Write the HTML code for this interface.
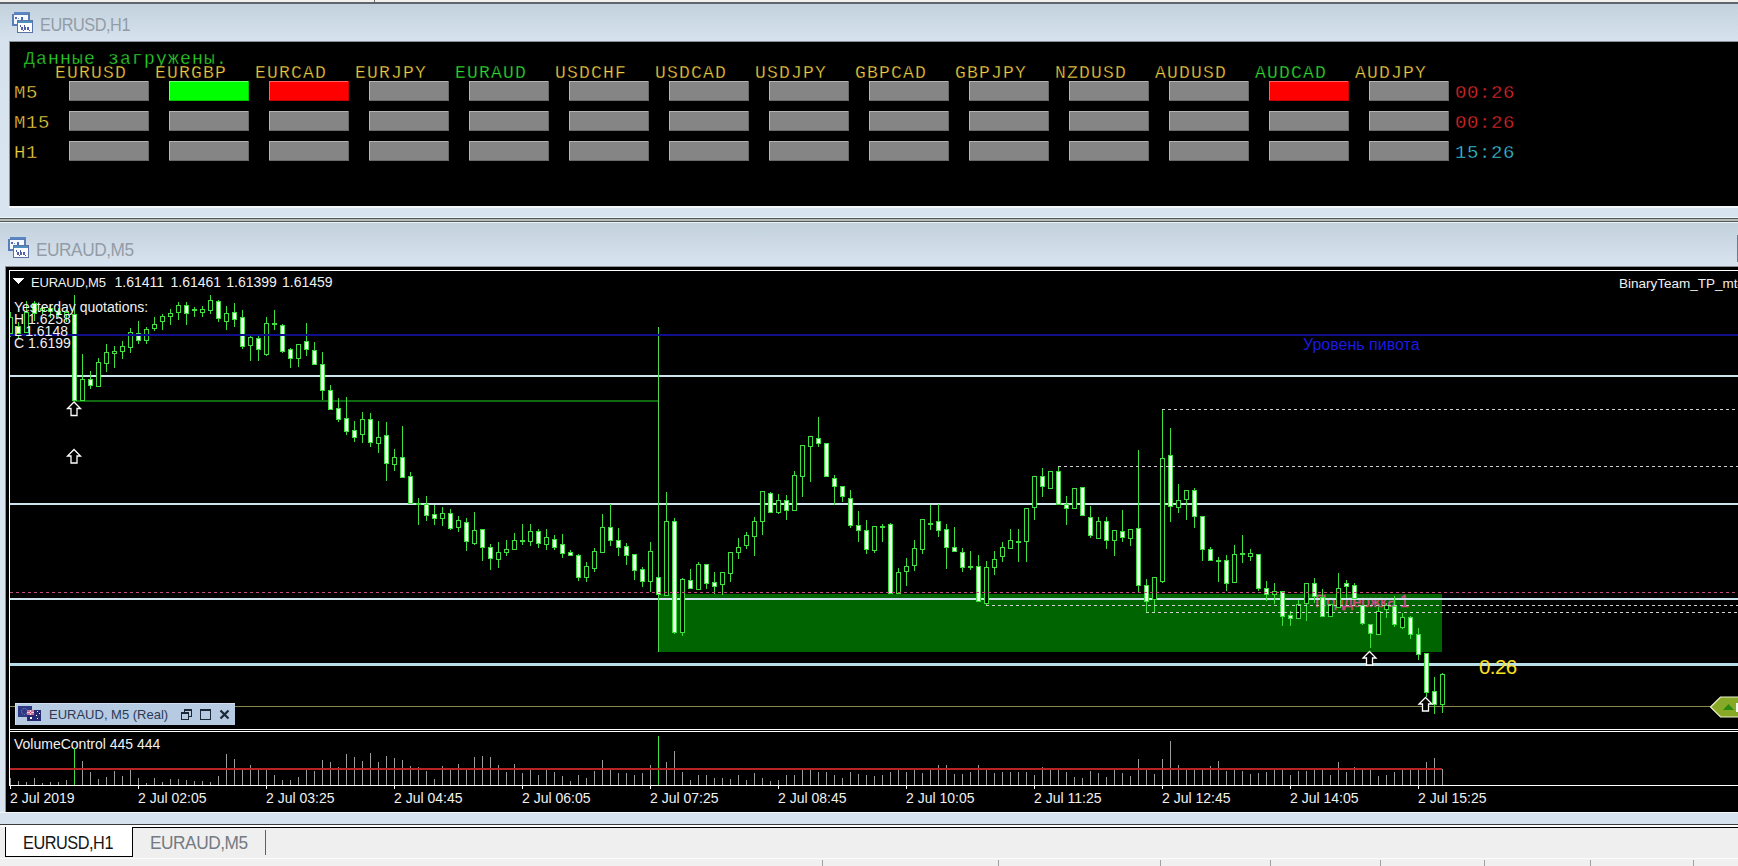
<!DOCTYPE html><html><head><meta charset="utf-8"><style>
html,body{margin:0;padding:0;width:1738px;height:866px;overflow:hidden;background:#f0f0f0;}
.abs{position:absolute;}
</style></head><body>
<svg width="1738" height="866" viewBox="0 0 1738 866" style="position:absolute;left:0;top:0" shape-rendering="crispEdges" font-family='"Liberation Sans", sans-serif'>
<defs><linearGradient id="tb1" gradientUnits="userSpaceOnUse" x1="0" y1="4" x2="0" y2="217"><stop offset="0" stop-color="#c3d1dd"/><stop offset="0.17" stop-color="#d6e3ef"/><stop offset="1" stop-color="#d8e4f0"/></linearGradient><linearGradient id="tb2" gradientUnits="userSpaceOnUse" x1="0" y1="223" x2="0" y2="813"><stop offset="0" stop-color="#c3d1dd"/><stop offset="0.073" stop-color="#d8e4f0"/><stop offset="1" stop-color="#d8e4f0"/></linearGradient></defs>
<rect x="0" y="0" width="1738" height="2" fill="#f1f0ed" />
<rect x="374" y="0" width="1" height="2" fill="#6a6a6a" />
<rect x="0" y="2" width="1738" height="2" fill="#5f656c" />
<rect x="0" y="4" width="1738" height="214" fill="url(#tb1)" />
<rect x="9" y="41" width="1729" height="1" fill="#8d9298" />
<rect x="9" y="41" width="1" height="165" fill="#8d9298" />
<rect x="10" y="42" width="1728" height="164" fill="#000" />
<rect x="9" y="206" width="1729" height="2" fill="#f4f8fb" />
<rect x="0" y="217" width="1738" height="1" fill="#eef3f7" />
<rect x="0" y="218" width="1738" height="1" fill="#4f5858" />
<rect x="0" y="219" width="1738" height="2" fill="#b8bcb8" />
<rect x="0" y="221" width="1738" height="1" fill="#4f5858" />
<rect x="0" y="222" width="1738" height="1" fill="#eef3f7" />
<rect x="0" y="223" width="1738" height="590" fill="url(#tb2)" />
<rect x="5" y="266" width="1733" height="1" fill="#8d9298" />
<rect x="5" y="266" width="1" height="546" fill="#8d9298" />
<rect x="6" y="267" width="1732" height="545" fill="#000" />
<rect x="0" y="812" width="1738" height="1" fill="#f4f8fb" />
<rect x="0" y="813" width="1738" height="11" fill="#d6e3ef" />
<rect x="0" y="824" width="1738" height="1" fill="#3c3c3c" />
<rect x="0" y="825" width="1738" height="41" fill="#efefef" />
<g transform="translate(12,12)">
<rect x="2" y="0" width="16" height="3" fill="#5b85c5" />
<rect x="0" y="2" width="18" height="12" fill="#5b7db5" />
<rect x="2" y="3" width="14" height="9" fill="#f6faff" />
<rect x="3" y="5" width="2" height="2" fill="#4a6ac0" />
<rect x="9" y="5" width="2" height="3" fill="#4a6ac0" />
<rect x="6" y="6" width="1" height="1" fill="#8090d0" />
<rect x="5" y="8" width="16" height="13" fill="#5a74a8" />
<rect x="6" y="9" width="14" height="2" fill="#4f8fc0" />
<rect x="6" y="11" width="14" height="9" fill="#ffffff" />
<rect x="8" y="13" width="1" height="2" fill="#4a5aa0" />
<rect x="9" y="15" width="2" height="3" fill="#5060b0" />
<rect x="12" y="15" width="2" height="3" fill="#5060b0" />
<rect x="15" y="15" width="2" height="3" fill="#5060b0" />
<rect x="12" y="13" width="1" height="2" fill="#4a5aa0" />
<rect x="17" y="18" width="1" height="1" fill="#4a5aa0" />
<rect x="11" y="18" width="1" height="1" fill="#4a5aa0" />
</g>
<g transform="translate(8,237)">
<rect x="2" y="0" width="16" height="3" fill="#5b85c5" />
<rect x="0" y="2" width="18" height="12" fill="#5b7db5" />
<rect x="2" y="3" width="14" height="9" fill="#f6faff" />
<rect x="3" y="5" width="2" height="2" fill="#4a6ac0" />
<rect x="9" y="5" width="2" height="3" fill="#4a6ac0" />
<rect x="6" y="6" width="1" height="1" fill="#8090d0" />
<rect x="5" y="8" width="16" height="13" fill="#5a74a8" />
<rect x="6" y="9" width="14" height="2" fill="#4f8fc0" />
<rect x="6" y="11" width="14" height="9" fill="#ffffff" />
<rect x="8" y="13" width="1" height="2" fill="#4a5aa0" />
<rect x="9" y="15" width="2" height="3" fill="#5060b0" />
<rect x="12" y="15" width="2" height="3" fill="#5060b0" />
<rect x="15" y="15" width="2" height="3" fill="#5060b0" />
<rect x="12" y="13" width="1" height="2" fill="#4a5aa0" />
<rect x="17" y="18" width="1" height="1" fill="#4a5aa0" />
<rect x="11" y="18" width="1" height="1" fill="#4a5aa0" />
</g>
<rect x="1737" y="235" width="1" height="27" fill="#6c7a8e" />
<text transform="translate(40,31) scale(0.88,1)" x="0" y="0" font-size="18.5" letter-spacing="-0.5" fill="#939ca6">EURUSD,H1</text>
<text transform="translate(36,256) scale(0.935,1)" x="0" y="0" font-size="18.5" letter-spacing="-0.5" fill="#939ca6">EURAUD,M5</text>
<text x="24" y="64" font-size="18" letter-spacing="1.2" font-family='"Liberation Mono", monospace' fill="#2ee02e">Данные загружены.</text>
<text x="24" y="64" font-size="18" letter-spacing="1.2" font-family='"Liberation Mono", monospace' fill="none" stroke="#000" stroke-width="0.35">Данные загружены.</text>
<text x="55" y="78" font-size="18" letter-spacing="1.2" font-family='"Liberation Mono", monospace' fill="#f2d040">EURUSD</text>
<text x="55" y="78" font-size="18" letter-spacing="1.2" font-family='"Liberation Mono", monospace' fill="none" stroke="#000" stroke-width="0.35">EURUSD</text>
<text x="155" y="78" font-size="18" letter-spacing="1.2" font-family='"Liberation Mono", monospace' fill="#f2d040">EURGBP</text>
<text x="155" y="78" font-size="18" letter-spacing="1.2" font-family='"Liberation Mono", monospace' fill="none" stroke="#000" stroke-width="0.35">EURGBP</text>
<text x="255" y="78" font-size="18" letter-spacing="1.2" font-family='"Liberation Mono", monospace' fill="#f2d040">EURCAD</text>
<text x="255" y="78" font-size="18" letter-spacing="1.2" font-family='"Liberation Mono", monospace' fill="none" stroke="#000" stroke-width="0.35">EURCAD</text>
<text x="355" y="78" font-size="18" letter-spacing="1.2" font-family='"Liberation Mono", monospace' fill="#f2d040">EURJPY</text>
<text x="355" y="78" font-size="18" letter-spacing="1.2" font-family='"Liberation Mono", monospace' fill="none" stroke="#000" stroke-width="0.35">EURJPY</text>
<text x="455" y="78" font-size="18" letter-spacing="1.2" font-family='"Liberation Mono", monospace' fill="#2ee02e">EURAUD</text>
<text x="455" y="78" font-size="18" letter-spacing="1.2" font-family='"Liberation Mono", monospace' fill="none" stroke="#000" stroke-width="0.35">EURAUD</text>
<text x="555" y="78" font-size="18" letter-spacing="1.2" font-family='"Liberation Mono", monospace' fill="#f2d040">USDCHF</text>
<text x="555" y="78" font-size="18" letter-spacing="1.2" font-family='"Liberation Mono", monospace' fill="none" stroke="#000" stroke-width="0.35">USDCHF</text>
<text x="655" y="78" font-size="18" letter-spacing="1.2" font-family='"Liberation Mono", monospace' fill="#f2d040">USDCAD</text>
<text x="655" y="78" font-size="18" letter-spacing="1.2" font-family='"Liberation Mono", monospace' fill="none" stroke="#000" stroke-width="0.35">USDCAD</text>
<text x="755" y="78" font-size="18" letter-spacing="1.2" font-family='"Liberation Mono", monospace' fill="#f2d040">USDJPY</text>
<text x="755" y="78" font-size="18" letter-spacing="1.2" font-family='"Liberation Mono", monospace' fill="none" stroke="#000" stroke-width="0.35">USDJPY</text>
<text x="855" y="78" font-size="18" letter-spacing="1.2" font-family='"Liberation Mono", monospace' fill="#f2d040">GBPCAD</text>
<text x="855" y="78" font-size="18" letter-spacing="1.2" font-family='"Liberation Mono", monospace' fill="none" stroke="#000" stroke-width="0.35">GBPCAD</text>
<text x="955" y="78" font-size="18" letter-spacing="1.2" font-family='"Liberation Mono", monospace' fill="#f2d040">GBPJPY</text>
<text x="955" y="78" font-size="18" letter-spacing="1.2" font-family='"Liberation Mono", monospace' fill="none" stroke="#000" stroke-width="0.35">GBPJPY</text>
<text x="1055" y="78" font-size="18" letter-spacing="1.2" font-family='"Liberation Mono", monospace' fill="#f2d040">NZDUSD</text>
<text x="1055" y="78" font-size="18" letter-spacing="1.2" font-family='"Liberation Mono", monospace' fill="none" stroke="#000" stroke-width="0.35">NZDUSD</text>
<text x="1155" y="78" font-size="18" letter-spacing="1.2" font-family='"Liberation Mono", monospace' fill="#f2d040">AUDUSD</text>
<text x="1155" y="78" font-size="18" letter-spacing="1.2" font-family='"Liberation Mono", monospace' fill="none" stroke="#000" stroke-width="0.35">AUDUSD</text>
<text x="1255" y="78" font-size="18" letter-spacing="1.2" font-family='"Liberation Mono", monospace' fill="#2ee02e">AUDCAD</text>
<text x="1255" y="78" font-size="18" letter-spacing="1.2" font-family='"Liberation Mono", monospace' fill="none" stroke="#000" stroke-width="0.35">AUDCAD</text>
<text x="1355" y="78" font-size="18" letter-spacing="1.2" font-family='"Liberation Mono", monospace' fill="#f2d040">AUDJPY</text>
<text x="1355" y="78" font-size="18" letter-spacing="1.2" font-family='"Liberation Mono", monospace' fill="none" stroke="#000" stroke-width="0.35">AUDJPY</text>
<text x="14" y="98" font-size="19" letter-spacing="0.6" font-family='"Liberation Mono", monospace' fill="#f2d040">M5</text>
<text x="14" y="98" font-size="19" letter-spacing="0.6" font-family='"Liberation Mono", monospace' fill="none" stroke="#000" stroke-width="0.35">M5</text>
<text x="14" y="128" font-size="19" letter-spacing="0.6" font-family='"Liberation Mono", monospace' fill="#f2d040">M15</text>
<text x="14" y="128" font-size="19" letter-spacing="0.6" font-family='"Liberation Mono", monospace' fill="none" stroke="#000" stroke-width="0.35">M15</text>
<text x="14" y="158" font-size="19" letter-spacing="0.6" font-family='"Liberation Mono", monospace' fill="#f2d040">H1</text>
<text x="14" y="158" font-size="19" letter-spacing="0.6" font-family='"Liberation Mono", monospace' fill="none" stroke="#000" stroke-width="0.35">H1</text>
<rect x="69" y="81" width="80" height="20" fill="#858585" />
<rect x="69" y="81" width="80" height="1" fill="#b4b4b4" />
<rect x="69" y="81" width="1" height="20" fill="#b4b4b4" />
<rect x="69" y="100" width="80" height="1" fill="#6a6a6a" />
<rect x="148" y="81" width="1" height="20" fill="#6a6a6a" />
<rect x="169" y="81" width="80" height="20" fill="#00ff00" />
<rect x="169" y="81" width="80" height="1" fill="#70ff70" />
<rect x="169" y="81" width="1" height="20" fill="#70ff70" />
<rect x="169" y="100" width="80" height="1" fill="#00c800" />
<rect x="248" y="81" width="1" height="20" fill="#00c800" />
<rect x="269" y="81" width="80" height="20" fill="#ff0000" />
<rect x="269" y="81" width="80" height="1" fill="#ff6060" />
<rect x="269" y="81" width="1" height="20" fill="#ff6060" />
<rect x="269" y="100" width="80" height="1" fill="#c80000" />
<rect x="348" y="81" width="1" height="20" fill="#c80000" />
<rect x="369" y="81" width="80" height="20" fill="#858585" />
<rect x="369" y="81" width="80" height="1" fill="#b4b4b4" />
<rect x="369" y="81" width="1" height="20" fill="#b4b4b4" />
<rect x="369" y="100" width="80" height="1" fill="#6a6a6a" />
<rect x="448" y="81" width="1" height="20" fill="#6a6a6a" />
<rect x="469" y="81" width="80" height="20" fill="#858585" />
<rect x="469" y="81" width="80" height="1" fill="#b4b4b4" />
<rect x="469" y="81" width="1" height="20" fill="#b4b4b4" />
<rect x="469" y="100" width="80" height="1" fill="#6a6a6a" />
<rect x="548" y="81" width="1" height="20" fill="#6a6a6a" />
<rect x="569" y="81" width="80" height="20" fill="#858585" />
<rect x="569" y="81" width="80" height="1" fill="#b4b4b4" />
<rect x="569" y="81" width="1" height="20" fill="#b4b4b4" />
<rect x="569" y="100" width="80" height="1" fill="#6a6a6a" />
<rect x="648" y="81" width="1" height="20" fill="#6a6a6a" />
<rect x="669" y="81" width="80" height="20" fill="#858585" />
<rect x="669" y="81" width="80" height="1" fill="#b4b4b4" />
<rect x="669" y="81" width="1" height="20" fill="#b4b4b4" />
<rect x="669" y="100" width="80" height="1" fill="#6a6a6a" />
<rect x="748" y="81" width="1" height="20" fill="#6a6a6a" />
<rect x="769" y="81" width="80" height="20" fill="#858585" />
<rect x="769" y="81" width="80" height="1" fill="#b4b4b4" />
<rect x="769" y="81" width="1" height="20" fill="#b4b4b4" />
<rect x="769" y="100" width="80" height="1" fill="#6a6a6a" />
<rect x="848" y="81" width="1" height="20" fill="#6a6a6a" />
<rect x="869" y="81" width="80" height="20" fill="#858585" />
<rect x="869" y="81" width="80" height="1" fill="#b4b4b4" />
<rect x="869" y="81" width="1" height="20" fill="#b4b4b4" />
<rect x="869" y="100" width="80" height="1" fill="#6a6a6a" />
<rect x="948" y="81" width="1" height="20" fill="#6a6a6a" />
<rect x="969" y="81" width="80" height="20" fill="#858585" />
<rect x="969" y="81" width="80" height="1" fill="#b4b4b4" />
<rect x="969" y="81" width="1" height="20" fill="#b4b4b4" />
<rect x="969" y="100" width="80" height="1" fill="#6a6a6a" />
<rect x="1048" y="81" width="1" height="20" fill="#6a6a6a" />
<rect x="1069" y="81" width="80" height="20" fill="#858585" />
<rect x="1069" y="81" width="80" height="1" fill="#b4b4b4" />
<rect x="1069" y="81" width="1" height="20" fill="#b4b4b4" />
<rect x="1069" y="100" width="80" height="1" fill="#6a6a6a" />
<rect x="1148" y="81" width="1" height="20" fill="#6a6a6a" />
<rect x="1169" y="81" width="80" height="20" fill="#858585" />
<rect x="1169" y="81" width="80" height="1" fill="#b4b4b4" />
<rect x="1169" y="81" width="1" height="20" fill="#b4b4b4" />
<rect x="1169" y="100" width="80" height="1" fill="#6a6a6a" />
<rect x="1248" y="81" width="1" height="20" fill="#6a6a6a" />
<rect x="1269" y="81" width="80" height="20" fill="#ff0000" />
<rect x="1269" y="81" width="80" height="1" fill="#ff6060" />
<rect x="1269" y="81" width="1" height="20" fill="#ff6060" />
<rect x="1269" y="100" width="80" height="1" fill="#c80000" />
<rect x="1348" y="81" width="1" height="20" fill="#c80000" />
<rect x="1369" y="81" width="80" height="20" fill="#858585" />
<rect x="1369" y="81" width="80" height="1" fill="#b4b4b4" />
<rect x="1369" y="81" width="1" height="20" fill="#b4b4b4" />
<rect x="1369" y="100" width="80" height="1" fill="#6a6a6a" />
<rect x="1448" y="81" width="1" height="20" fill="#6a6a6a" />
<rect x="69" y="111" width="80" height="20" fill="#858585" />
<rect x="69" y="111" width="80" height="1" fill="#b4b4b4" />
<rect x="69" y="111" width="1" height="20" fill="#b4b4b4" />
<rect x="69" y="130" width="80" height="1" fill="#6a6a6a" />
<rect x="148" y="111" width="1" height="20" fill="#6a6a6a" />
<rect x="169" y="111" width="80" height="20" fill="#858585" />
<rect x="169" y="111" width="80" height="1" fill="#b4b4b4" />
<rect x="169" y="111" width="1" height="20" fill="#b4b4b4" />
<rect x="169" y="130" width="80" height="1" fill="#6a6a6a" />
<rect x="248" y="111" width="1" height="20" fill="#6a6a6a" />
<rect x="269" y="111" width="80" height="20" fill="#858585" />
<rect x="269" y="111" width="80" height="1" fill="#b4b4b4" />
<rect x="269" y="111" width="1" height="20" fill="#b4b4b4" />
<rect x="269" y="130" width="80" height="1" fill="#6a6a6a" />
<rect x="348" y="111" width="1" height="20" fill="#6a6a6a" />
<rect x="369" y="111" width="80" height="20" fill="#858585" />
<rect x="369" y="111" width="80" height="1" fill="#b4b4b4" />
<rect x="369" y="111" width="1" height="20" fill="#b4b4b4" />
<rect x="369" y="130" width="80" height="1" fill="#6a6a6a" />
<rect x="448" y="111" width="1" height="20" fill="#6a6a6a" />
<rect x="469" y="111" width="80" height="20" fill="#858585" />
<rect x="469" y="111" width="80" height="1" fill="#b4b4b4" />
<rect x="469" y="111" width="1" height="20" fill="#b4b4b4" />
<rect x="469" y="130" width="80" height="1" fill="#6a6a6a" />
<rect x="548" y="111" width="1" height="20" fill="#6a6a6a" />
<rect x="569" y="111" width="80" height="20" fill="#858585" />
<rect x="569" y="111" width="80" height="1" fill="#b4b4b4" />
<rect x="569" y="111" width="1" height="20" fill="#b4b4b4" />
<rect x="569" y="130" width="80" height="1" fill="#6a6a6a" />
<rect x="648" y="111" width="1" height="20" fill="#6a6a6a" />
<rect x="669" y="111" width="80" height="20" fill="#858585" />
<rect x="669" y="111" width="80" height="1" fill="#b4b4b4" />
<rect x="669" y="111" width="1" height="20" fill="#b4b4b4" />
<rect x="669" y="130" width="80" height="1" fill="#6a6a6a" />
<rect x="748" y="111" width="1" height="20" fill="#6a6a6a" />
<rect x="769" y="111" width="80" height="20" fill="#858585" />
<rect x="769" y="111" width="80" height="1" fill="#b4b4b4" />
<rect x="769" y="111" width="1" height="20" fill="#b4b4b4" />
<rect x="769" y="130" width="80" height="1" fill="#6a6a6a" />
<rect x="848" y="111" width="1" height="20" fill="#6a6a6a" />
<rect x="869" y="111" width="80" height="20" fill="#858585" />
<rect x="869" y="111" width="80" height="1" fill="#b4b4b4" />
<rect x="869" y="111" width="1" height="20" fill="#b4b4b4" />
<rect x="869" y="130" width="80" height="1" fill="#6a6a6a" />
<rect x="948" y="111" width="1" height="20" fill="#6a6a6a" />
<rect x="969" y="111" width="80" height="20" fill="#858585" />
<rect x="969" y="111" width="80" height="1" fill="#b4b4b4" />
<rect x="969" y="111" width="1" height="20" fill="#b4b4b4" />
<rect x="969" y="130" width="80" height="1" fill="#6a6a6a" />
<rect x="1048" y="111" width="1" height="20" fill="#6a6a6a" />
<rect x="1069" y="111" width="80" height="20" fill="#858585" />
<rect x="1069" y="111" width="80" height="1" fill="#b4b4b4" />
<rect x="1069" y="111" width="1" height="20" fill="#b4b4b4" />
<rect x="1069" y="130" width="80" height="1" fill="#6a6a6a" />
<rect x="1148" y="111" width="1" height="20" fill="#6a6a6a" />
<rect x="1169" y="111" width="80" height="20" fill="#858585" />
<rect x="1169" y="111" width="80" height="1" fill="#b4b4b4" />
<rect x="1169" y="111" width="1" height="20" fill="#b4b4b4" />
<rect x="1169" y="130" width="80" height="1" fill="#6a6a6a" />
<rect x="1248" y="111" width="1" height="20" fill="#6a6a6a" />
<rect x="1269" y="111" width="80" height="20" fill="#858585" />
<rect x="1269" y="111" width="80" height="1" fill="#b4b4b4" />
<rect x="1269" y="111" width="1" height="20" fill="#b4b4b4" />
<rect x="1269" y="130" width="80" height="1" fill="#6a6a6a" />
<rect x="1348" y="111" width="1" height="20" fill="#6a6a6a" />
<rect x="1369" y="111" width="80" height="20" fill="#858585" />
<rect x="1369" y="111" width="80" height="1" fill="#b4b4b4" />
<rect x="1369" y="111" width="1" height="20" fill="#b4b4b4" />
<rect x="1369" y="130" width="80" height="1" fill="#6a6a6a" />
<rect x="1448" y="111" width="1" height="20" fill="#6a6a6a" />
<rect x="69" y="141" width="80" height="20" fill="#858585" />
<rect x="69" y="141" width="80" height="1" fill="#b4b4b4" />
<rect x="69" y="141" width="1" height="20" fill="#b4b4b4" />
<rect x="69" y="160" width="80" height="1" fill="#6a6a6a" />
<rect x="148" y="141" width="1" height="20" fill="#6a6a6a" />
<rect x="169" y="141" width="80" height="20" fill="#858585" />
<rect x="169" y="141" width="80" height="1" fill="#b4b4b4" />
<rect x="169" y="141" width="1" height="20" fill="#b4b4b4" />
<rect x="169" y="160" width="80" height="1" fill="#6a6a6a" />
<rect x="248" y="141" width="1" height="20" fill="#6a6a6a" />
<rect x="269" y="141" width="80" height="20" fill="#858585" />
<rect x="269" y="141" width="80" height="1" fill="#b4b4b4" />
<rect x="269" y="141" width="1" height="20" fill="#b4b4b4" />
<rect x="269" y="160" width="80" height="1" fill="#6a6a6a" />
<rect x="348" y="141" width="1" height="20" fill="#6a6a6a" />
<rect x="369" y="141" width="80" height="20" fill="#858585" />
<rect x="369" y="141" width="80" height="1" fill="#b4b4b4" />
<rect x="369" y="141" width="1" height="20" fill="#b4b4b4" />
<rect x="369" y="160" width="80" height="1" fill="#6a6a6a" />
<rect x="448" y="141" width="1" height="20" fill="#6a6a6a" />
<rect x="469" y="141" width="80" height="20" fill="#858585" />
<rect x="469" y="141" width="80" height="1" fill="#b4b4b4" />
<rect x="469" y="141" width="1" height="20" fill="#b4b4b4" />
<rect x="469" y="160" width="80" height="1" fill="#6a6a6a" />
<rect x="548" y="141" width="1" height="20" fill="#6a6a6a" />
<rect x="569" y="141" width="80" height="20" fill="#858585" />
<rect x="569" y="141" width="80" height="1" fill="#b4b4b4" />
<rect x="569" y="141" width="1" height="20" fill="#b4b4b4" />
<rect x="569" y="160" width="80" height="1" fill="#6a6a6a" />
<rect x="648" y="141" width="1" height="20" fill="#6a6a6a" />
<rect x="669" y="141" width="80" height="20" fill="#858585" />
<rect x="669" y="141" width="80" height="1" fill="#b4b4b4" />
<rect x="669" y="141" width="1" height="20" fill="#b4b4b4" />
<rect x="669" y="160" width="80" height="1" fill="#6a6a6a" />
<rect x="748" y="141" width="1" height="20" fill="#6a6a6a" />
<rect x="769" y="141" width="80" height="20" fill="#858585" />
<rect x="769" y="141" width="80" height="1" fill="#b4b4b4" />
<rect x="769" y="141" width="1" height="20" fill="#b4b4b4" />
<rect x="769" y="160" width="80" height="1" fill="#6a6a6a" />
<rect x="848" y="141" width="1" height="20" fill="#6a6a6a" />
<rect x="869" y="141" width="80" height="20" fill="#858585" />
<rect x="869" y="141" width="80" height="1" fill="#b4b4b4" />
<rect x="869" y="141" width="1" height="20" fill="#b4b4b4" />
<rect x="869" y="160" width="80" height="1" fill="#6a6a6a" />
<rect x="948" y="141" width="1" height="20" fill="#6a6a6a" />
<rect x="969" y="141" width="80" height="20" fill="#858585" />
<rect x="969" y="141" width="80" height="1" fill="#b4b4b4" />
<rect x="969" y="141" width="1" height="20" fill="#b4b4b4" />
<rect x="969" y="160" width="80" height="1" fill="#6a6a6a" />
<rect x="1048" y="141" width="1" height="20" fill="#6a6a6a" />
<rect x="1069" y="141" width="80" height="20" fill="#858585" />
<rect x="1069" y="141" width="80" height="1" fill="#b4b4b4" />
<rect x="1069" y="141" width="1" height="20" fill="#b4b4b4" />
<rect x="1069" y="160" width="80" height="1" fill="#6a6a6a" />
<rect x="1148" y="141" width="1" height="20" fill="#6a6a6a" />
<rect x="1169" y="141" width="80" height="20" fill="#858585" />
<rect x="1169" y="141" width="80" height="1" fill="#b4b4b4" />
<rect x="1169" y="141" width="1" height="20" fill="#b4b4b4" />
<rect x="1169" y="160" width="80" height="1" fill="#6a6a6a" />
<rect x="1248" y="141" width="1" height="20" fill="#6a6a6a" />
<rect x="1269" y="141" width="80" height="20" fill="#858585" />
<rect x="1269" y="141" width="80" height="1" fill="#b4b4b4" />
<rect x="1269" y="141" width="1" height="20" fill="#b4b4b4" />
<rect x="1269" y="160" width="80" height="1" fill="#6a6a6a" />
<rect x="1348" y="141" width="1" height="20" fill="#6a6a6a" />
<rect x="1369" y="141" width="80" height="20" fill="#858585" />
<rect x="1369" y="141" width="80" height="1" fill="#b4b4b4" />
<rect x="1369" y="141" width="1" height="20" fill="#b4b4b4" />
<rect x="1369" y="160" width="80" height="1" fill="#6a6a6a" />
<rect x="1448" y="141" width="1" height="20" fill="#6a6a6a" />
<text x="1455" y="98" font-size="19" letter-spacing="0.6" font-family='"Liberation Mono", monospace' fill="#e02828">00:26</text>
<text x="1455" y="98" font-size="19" letter-spacing="0.6" font-family='"Liberation Mono", monospace' fill="none" stroke="#000" stroke-width="0.35">00:26</text>
<text x="1455" y="128" font-size="19" letter-spacing="0.6" font-family='"Liberation Mono", monospace' fill="#e02828">00:26</text>
<text x="1455" y="128" font-size="19" letter-spacing="0.6" font-family='"Liberation Mono", monospace' fill="none" stroke="#000" stroke-width="0.35">00:26</text>
<text x="1455" y="158" font-size="19" letter-spacing="0.6" font-family='"Liberation Mono", monospace' fill="#38c8e0">15:26</text>
<text x="1455" y="158" font-size="19" letter-spacing="0.6" font-family='"Liberation Mono", monospace' fill="none" stroke="#000" stroke-width="0.35">15:26</text>
<rect x="9" y="270" width="1729" height="1" fill="#ffffff" />
<rect x="9" y="270" width="1" height="516" fill="#ffffff" />
<rect x="10" y="375" width="1728" height="2" fill="#cde3ee" />
<rect x="74" y="400" width="585" height="2" fill="#106810" />
<rect x="10" y="503" width="1728" height="2" fill="#cde3ee" />
<rect x="658" y="594" width="784" height="58" fill="#006400" />
<text x="1315" y="607" font-size="16" letter-spacing="-0.3" fill="#d44a86" stroke="#d44a86" stroke-width="0.35">Поддержка 1</text>
<rect x="10" y="598" width="1728" height="2" fill="#cde3ee" />
<rect x="10" y="663" width="1728" height="3" fill="#b8dfe8" />
<rect x="10" y="706" width="1700" height="1" fill="#8a8a50" />
<rect x="658" y="327" width="1" height="325" fill="#50d850" />
<rect x="10" y="312" width="1" height="25" fill="#3ee03e" />
<rect x="10" y="317" width="3" height="17" fill="#3ee03e" />
<rect x="10" y="318" width="2" height="15" fill="#000" />
<rect x="18" y="322" width="1" height="17" fill="#3ee03e" />
<rect x="16" y="326" width="5" height="8" fill="#3ee03e" />
<rect x="17" y="327" width="3" height="6" fill="#f4fff4" />
<rect x="26" y="301" width="1" height="32" fill="#3ee03e" />
<rect x="24" y="312" width="5" height="21" fill="#3ee03e" />
<rect x="25" y="313" width="3" height="19" fill="#000" />
<rect x="34" y="301" width="1" height="20" fill="#3ee03e" />
<rect x="32" y="303" width="5" height="11" fill="#3ee03e" />
<rect x="33" y="304" width="3" height="9" fill="#f4fff4" />
<rect x="42" y="306" width="1" height="8" fill="#3ee03e" />
<rect x="40" y="308" width="5" height="3" fill="#3ee03e" />
<rect x="41" y="309" width="3" height="1" fill="#000" />
<rect x="50" y="304" width="1" height="14" fill="#3ee03e" />
<rect x="48" y="308" width="5" height="4" fill="#3ee03e" />
<rect x="49" y="309" width="3" height="2" fill="#f4fff4" />
<rect x="58" y="308" width="1" height="9" fill="#3ee03e" />
<rect x="56" y="311" width="5" height="4" fill="#3ee03e" />
<rect x="57" y="312" width="3" height="2" fill="#f4fff4" />
<rect x="66" y="310" width="1" height="12" fill="#3ee03e" />
<rect x="64" y="312" width="5" height="3" fill="#3ee03e" />
<rect x="65" y="313" width="3" height="1" fill="#000" />
<rect x="74" y="295" width="1" height="106" fill="#3ee03e" />
<rect x="72" y="314" width="5" height="87" fill="#3ee03e" />
<rect x="73" y="315" width="3" height="85" fill="#f4fff4" />
<rect x="82" y="354" width="1" height="47" fill="#3ee03e" />
<rect x="80" y="379" width="5" height="22" fill="#3ee03e" />
<rect x="81" y="380" width="3" height="20" fill="#000" />
<rect x="90" y="371" width="1" height="18" fill="#3ee03e" />
<rect x="88" y="379" width="5" height="7" fill="#3ee03e" />
<rect x="89" y="380" width="3" height="5" fill="#f4fff4" />
<rect x="98" y="358" width="1" height="29" fill="#3ee03e" />
<rect x="96" y="362" width="5" height="25" fill="#3ee03e" />
<rect x="97" y="363" width="3" height="23" fill="#000" />
<rect x="106" y="344" width="1" height="28" fill="#3ee03e" />
<rect x="104" y="352" width="5" height="12" fill="#3ee03e" />
<rect x="105" y="353" width="3" height="10" fill="#000" />
<rect x="114" y="346" width="1" height="22" fill="#3ee03e" />
<rect x="112" y="351" width="5" height="3" fill="#3ee03e" />
<rect x="113" y="352" width="3" height="1" fill="#000" />
<rect x="122" y="341" width="1" height="18" fill="#3ee03e" />
<rect x="120" y="346" width="5" height="6" fill="#3ee03e" />
<rect x="121" y="347" width="3" height="4" fill="#000" />
<rect x="130" y="328" width="1" height="25" fill="#3ee03e" />
<rect x="128" y="332" width="5" height="16" fill="#3ee03e" />
<rect x="129" y="333" width="3" height="14" fill="#000" />
<rect x="138" y="321" width="1" height="23" fill="#3ee03e" />
<rect x="136" y="333" width="5" height="8" fill="#3ee03e" />
<rect x="137" y="334" width="3" height="6" fill="#f4fff4" />
<rect x="146" y="327" width="1" height="17" fill="#3ee03e" />
<rect x="144" y="329" width="5" height="12" fill="#3ee03e" />
<rect x="145" y="330" width="3" height="10" fill="#000" />
<rect x="154" y="317" width="1" height="14" fill="#3ee03e" />
<rect x="152" y="324" width="5" height="5" fill="#3ee03e" />
<rect x="153" y="325" width="3" height="3" fill="#000" />
<rect x="162" y="314" width="1" height="16" fill="#3ee03e" />
<rect x="160" y="316" width="5" height="6" fill="#3ee03e" />
<rect x="161" y="317" width="3" height="4" fill="#000" />
<rect x="170" y="309" width="1" height="16" fill="#3ee03e" />
<rect x="168" y="313" width="5" height="4" fill="#3ee03e" />
<rect x="169" y="314" width="3" height="2" fill="#000" />
<rect x="178" y="302" width="1" height="18" fill="#3ee03e" />
<rect x="176" y="305" width="5" height="8" fill="#3ee03e" />
<rect x="177" y="306" width="3" height="6" fill="#000" />
<rect x="186" y="302" width="1" height="23" fill="#3ee03e" />
<rect x="184" y="305" width="5" height="9" fill="#3ee03e" />
<rect x="185" y="306" width="3" height="7" fill="#f4fff4" />
<rect x="194" y="307" width="1" height="10" fill="#3ee03e" />
<rect x="192" y="309" width="5" height="2" fill="#3ee03e" />
<rect x="202" y="306" width="1" height="11" fill="#3ee03e" />
<rect x="200" y="309" width="5" height="4" fill="#3ee03e" />
<rect x="201" y="310" width="3" height="2" fill="#000" />
<rect x="210" y="295" width="1" height="19" fill="#3ee03e" />
<rect x="208" y="300" width="5" height="11" fill="#3ee03e" />
<rect x="209" y="301" width="3" height="9" fill="#000" />
<rect x="218" y="300" width="1" height="22" fill="#3ee03e" />
<rect x="216" y="301" width="5" height="18" fill="#3ee03e" />
<rect x="217" y="302" width="3" height="16" fill="#f4fff4" />
<rect x="226" y="306" width="1" height="24" fill="#3ee03e" />
<rect x="224" y="313" width="5" height="9" fill="#3ee03e" />
<rect x="225" y="314" width="3" height="7" fill="#000" />
<rect x="234" y="303" width="1" height="24" fill="#3ee03e" />
<rect x="232" y="312" width="5" height="8" fill="#3ee03e" />
<rect x="233" y="313" width="3" height="6" fill="#f4fff4" />
<rect x="242" y="310" width="1" height="39" fill="#3ee03e" />
<rect x="240" y="317" width="5" height="30" fill="#3ee03e" />
<rect x="241" y="318" width="3" height="28" fill="#f4fff4" />
<rect x="250" y="334" width="1" height="27" fill="#3ee03e" />
<rect x="248" y="337" width="5" height="9" fill="#3ee03e" />
<rect x="249" y="338" width="3" height="7" fill="#000" />
<rect x="258" y="336" width="1" height="25" fill="#3ee03e" />
<rect x="256" y="338" width="5" height="12" fill="#3ee03e" />
<rect x="257" y="339" width="3" height="10" fill="#f4fff4" />
<rect x="266" y="317" width="1" height="39" fill="#3ee03e" />
<rect x="264" y="323" width="5" height="32" fill="#3ee03e" />
<rect x="265" y="324" width="3" height="30" fill="#000" />
<rect x="274" y="310" width="1" height="20" fill="#3ee03e" />
<rect x="272" y="323" width="5" height="2" fill="#3ee03e" />
<rect x="282" y="324" width="1" height="29" fill="#3ee03e" />
<rect x="280" y="325" width="5" height="27" fill="#3ee03e" />
<rect x="281" y="326" width="3" height="25" fill="#f4fff4" />
<rect x="290" y="348" width="1" height="20" fill="#3ee03e" />
<rect x="288" y="349" width="5" height="10" fill="#3ee03e" />
<rect x="289" y="350" width="3" height="8" fill="#f4fff4" />
<rect x="298" y="344" width="1" height="23" fill="#3ee03e" />
<rect x="296" y="344" width="5" height="15" fill="#3ee03e" />
<rect x="297" y="345" width="3" height="13" fill="#000" />
<rect x="306" y="323" width="1" height="33" fill="#3ee03e" />
<rect x="304" y="341" width="5" height="9" fill="#3ee03e" />
<rect x="305" y="342" width="3" height="7" fill="#f4fff4" />
<rect x="314" y="342" width="1" height="23" fill="#3ee03e" />
<rect x="312" y="350" width="5" height="15" fill="#3ee03e" />
<rect x="313" y="351" width="3" height="13" fill="#f4fff4" />
<rect x="322" y="352" width="1" height="48" fill="#3ee03e" />
<rect x="320" y="364" width="5" height="27" fill="#3ee03e" />
<rect x="321" y="365" width="3" height="25" fill="#f4fff4" />
<rect x="330" y="385" width="1" height="25" fill="#3ee03e" />
<rect x="328" y="390" width="5" height="20" fill="#3ee03e" />
<rect x="329" y="391" width="3" height="18" fill="#f4fff4" />
<rect x="338" y="398" width="1" height="24" fill="#3ee03e" />
<rect x="336" y="408" width="5" height="12" fill="#3ee03e" />
<rect x="337" y="409" width="3" height="10" fill="#f4fff4" />
<rect x="346" y="397" width="1" height="38" fill="#3ee03e" />
<rect x="344" y="418" width="5" height="14" fill="#3ee03e" />
<rect x="345" y="419" width="3" height="12" fill="#f4fff4" />
<rect x="354" y="421" width="1" height="21" fill="#3ee03e" />
<rect x="352" y="430" width="5" height="8" fill="#3ee03e" />
<rect x="353" y="431" width="3" height="6" fill="#f4fff4" />
<rect x="362" y="412" width="1" height="31" fill="#3ee03e" />
<rect x="360" y="419" width="5" height="16" fill="#3ee03e" />
<rect x="361" y="420" width="3" height="14" fill="#000" />
<rect x="370" y="413" width="1" height="34" fill="#3ee03e" />
<rect x="368" y="419" width="5" height="24" fill="#3ee03e" />
<rect x="369" y="420" width="3" height="22" fill="#f4fff4" />
<rect x="378" y="421" width="1" height="32" fill="#3ee03e" />
<rect x="376" y="437" width="5" height="7" fill="#3ee03e" />
<rect x="377" y="438" width="3" height="5" fill="#000" />
<rect x="386" y="422" width="1" height="59" fill="#3ee03e" />
<rect x="384" y="435" width="5" height="29" fill="#3ee03e" />
<rect x="385" y="436" width="3" height="27" fill="#f4fff4" />
<rect x="394" y="449" width="1" height="22" fill="#3ee03e" />
<rect x="392" y="457" width="5" height="8" fill="#3ee03e" />
<rect x="393" y="458" width="3" height="6" fill="#000" />
<rect x="402" y="426" width="1" height="52" fill="#3ee03e" />
<rect x="400" y="457" width="5" height="21" fill="#3ee03e" />
<rect x="401" y="458" width="3" height="19" fill="#f4fff4" />
<rect x="410" y="472" width="1" height="32" fill="#3ee03e" />
<rect x="408" y="476" width="5" height="28" fill="#3ee03e" />
<rect x="409" y="477" width="3" height="26" fill="#f4fff4" />
<rect x="418" y="498" width="1" height="27" fill="#3ee03e" />
<rect x="416" y="503" width="5" height="2" fill="#3ee03e" />
<rect x="426" y="496" width="1" height="25" fill="#3ee03e" />
<rect x="424" y="504" width="5" height="12" fill="#3ee03e" />
<rect x="425" y="505" width="3" height="10" fill="#f4fff4" />
<rect x="434" y="505" width="1" height="20" fill="#3ee03e" />
<rect x="432" y="514" width="5" height="5" fill="#3ee03e" />
<rect x="433" y="515" width="3" height="3" fill="#f4fff4" />
<rect x="442" y="507" width="1" height="19" fill="#3ee03e" />
<rect x="440" y="513" width="5" height="6" fill="#3ee03e" />
<rect x="441" y="514" width="3" height="4" fill="#000" />
<rect x="450" y="509" width="1" height="21" fill="#3ee03e" />
<rect x="448" y="513" width="5" height="16" fill="#3ee03e" />
<rect x="449" y="514" width="3" height="14" fill="#f4fff4" />
<rect x="458" y="516" width="1" height="16" fill="#3ee03e" />
<rect x="456" y="520" width="5" height="8" fill="#3ee03e" />
<rect x="457" y="521" width="3" height="6" fill="#000" />
<rect x="466" y="518" width="1" height="33" fill="#3ee03e" />
<rect x="464" y="522" width="5" height="20" fill="#3ee03e" />
<rect x="465" y="523" width="3" height="18" fill="#f4fff4" />
<rect x="474" y="512" width="1" height="33" fill="#3ee03e" />
<rect x="472" y="530" width="5" height="14" fill="#3ee03e" />
<rect x="473" y="531" width="3" height="12" fill="#000" />
<rect x="482" y="529" width="1" height="32" fill="#3ee03e" />
<rect x="480" y="529" width="5" height="19" fill="#3ee03e" />
<rect x="481" y="530" width="3" height="17" fill="#f4fff4" />
<rect x="490" y="544" width="1" height="26" fill="#3ee03e" />
<rect x="488" y="547" width="5" height="12" fill="#3ee03e" />
<rect x="489" y="548" width="3" height="10" fill="#f4fff4" />
<rect x="498" y="542" width="1" height="26" fill="#3ee03e" />
<rect x="496" y="552" width="5" height="8" fill="#3ee03e" />
<rect x="497" y="553" width="3" height="6" fill="#000" />
<rect x="506" y="540" width="1" height="16" fill="#3ee03e" />
<rect x="504" y="549" width="5" height="4" fill="#3ee03e" />
<rect x="505" y="550" width="3" height="2" fill="#000" />
<rect x="514" y="533" width="1" height="17" fill="#3ee03e" />
<rect x="512" y="540" width="5" height="10" fill="#3ee03e" />
<rect x="513" y="541" width="3" height="8" fill="#000" />
<rect x="522" y="524" width="1" height="21" fill="#3ee03e" />
<rect x="520" y="540" width="5" height="2" fill="#3ee03e" />
<rect x="530" y="524" width="1" height="22" fill="#3ee03e" />
<rect x="528" y="531" width="5" height="11" fill="#3ee03e" />
<rect x="529" y="532" width="3" height="9" fill="#000" />
<rect x="538" y="529" width="1" height="19" fill="#3ee03e" />
<rect x="536" y="531" width="5" height="13" fill="#3ee03e" />
<rect x="537" y="532" width="3" height="11" fill="#f4fff4" />
<rect x="546" y="529" width="1" height="21" fill="#3ee03e" />
<rect x="544" y="537" width="5" height="8" fill="#3ee03e" />
<rect x="545" y="538" width="3" height="6" fill="#000" />
<rect x="554" y="535" width="1" height="15" fill="#3ee03e" />
<rect x="552" y="539" width="5" height="9" fill="#3ee03e" />
<rect x="553" y="540" width="3" height="7" fill="#f4fff4" />
<rect x="562" y="534" width="1" height="24" fill="#3ee03e" />
<rect x="560" y="544" width="5" height="10" fill="#3ee03e" />
<rect x="561" y="545" width="3" height="8" fill="#f4fff4" />
<rect x="570" y="550" width="1" height="6" fill="#3ee03e" />
<rect x="568" y="552" width="5" height="4" fill="#3ee03e" />
<rect x="569" y="553" width="3" height="2" fill="#f4fff4" />
<rect x="578" y="554" width="1" height="27" fill="#3ee03e" />
<rect x="576" y="555" width="5" height="23" fill="#3ee03e" />
<rect x="577" y="556" width="3" height="21" fill="#f4fff4" />
<rect x="586" y="562" width="1" height="20" fill="#3ee03e" />
<rect x="584" y="566" width="5" height="12" fill="#3ee03e" />
<rect x="585" y="567" width="3" height="10" fill="#000" />
<rect x="594" y="548" width="1" height="24" fill="#3ee03e" />
<rect x="592" y="551" width="5" height="18" fill="#3ee03e" />
<rect x="593" y="552" width="3" height="16" fill="#000" />
<rect x="602" y="514" width="1" height="39" fill="#3ee03e" />
<rect x="600" y="527" width="5" height="26" fill="#3ee03e" />
<rect x="601" y="528" width="3" height="24" fill="#000" />
<rect x="610" y="504" width="1" height="42" fill="#3ee03e" />
<rect x="608" y="527" width="5" height="14" fill="#3ee03e" />
<rect x="609" y="528" width="3" height="12" fill="#f4fff4" />
<rect x="618" y="528" width="1" height="28" fill="#3ee03e" />
<rect x="616" y="540" width="5" height="8" fill="#3ee03e" />
<rect x="617" y="541" width="3" height="6" fill="#f4fff4" />
<rect x="626" y="543" width="1" height="22" fill="#3ee03e" />
<rect x="624" y="546" width="5" height="10" fill="#3ee03e" />
<rect x="625" y="547" width="3" height="8" fill="#f4fff4" />
<rect x="634" y="554" width="1" height="26" fill="#3ee03e" />
<rect x="632" y="554" width="5" height="17" fill="#3ee03e" />
<rect x="633" y="555" width="3" height="15" fill="#f4fff4" />
<rect x="642" y="567" width="1" height="20" fill="#3ee03e" />
<rect x="640" y="569" width="5" height="13" fill="#3ee03e" />
<rect x="641" y="570" width="3" height="11" fill="#f4fff4" />
<rect x="650" y="542" width="1" height="50" fill="#3ee03e" />
<rect x="648" y="551" width="5" height="31" fill="#3ee03e" />
<rect x="649" y="552" width="3" height="29" fill="#000" />
<rect x="658" y="577" width="1" height="18" fill="#3ee03e" />
<rect x="656" y="577" width="5" height="18" fill="#3ee03e" />
<rect x="657" y="578" width="3" height="16" fill="#f4fff4" />
<rect x="666" y="492" width="1" height="104" fill="#3ee03e" />
<rect x="664" y="521" width="5" height="75" fill="#3ee03e" />
<rect x="665" y="522" width="3" height="73" fill="#000" />
<rect x="674" y="518" width="1" height="116" fill="#3ee03e" />
<rect x="672" y="521" width="5" height="112" fill="#3ee03e" />
<rect x="673" y="522" width="3" height="110" fill="#f4fff4" />
<rect x="682" y="578" width="1" height="58" fill="#3ee03e" />
<rect x="680" y="579" width="5" height="54" fill="#3ee03e" />
<rect x="681" y="580" width="3" height="52" fill="#000" />
<rect x="690" y="569" width="1" height="20" fill="#3ee03e" />
<rect x="688" y="580" width="5" height="9" fill="#3ee03e" />
<rect x="689" y="581" width="3" height="7" fill="#f4fff4" />
<rect x="698" y="562" width="1" height="28" fill="#3ee03e" />
<rect x="696" y="564" width="5" height="26" fill="#3ee03e" />
<rect x="697" y="565" width="3" height="24" fill="#000" />
<rect x="706" y="564" width="1" height="25" fill="#3ee03e" />
<rect x="704" y="564" width="5" height="20" fill="#3ee03e" />
<rect x="705" y="565" width="3" height="18" fill="#f4fff4" />
<rect x="714" y="572" width="1" height="22" fill="#3ee03e" />
<rect x="712" y="582" width="5" height="5" fill="#3ee03e" />
<rect x="713" y="583" width="3" height="3" fill="#f4fff4" />
<rect x="722" y="572" width="1" height="23" fill="#3ee03e" />
<rect x="720" y="572" width="5" height="13" fill="#3ee03e" />
<rect x="721" y="573" width="3" height="11" fill="#000" />
<rect x="730" y="552" width="1" height="30" fill="#3ee03e" />
<rect x="728" y="552" width="5" height="22" fill="#3ee03e" />
<rect x="729" y="553" width="3" height="20" fill="#000" />
<rect x="738" y="538" width="1" height="21" fill="#3ee03e" />
<rect x="736" y="547" width="5" height="6" fill="#3ee03e" />
<rect x="737" y="548" width="3" height="4" fill="#000" />
<rect x="746" y="532" width="1" height="17" fill="#3ee03e" />
<rect x="744" y="535" width="5" height="11" fill="#3ee03e" />
<rect x="745" y="536" width="3" height="9" fill="#000" />
<rect x="754" y="517" width="1" height="39" fill="#3ee03e" />
<rect x="752" y="521" width="5" height="16" fill="#3ee03e" />
<rect x="753" y="522" width="3" height="14" fill="#000" />
<rect x="762" y="491" width="1" height="44" fill="#3ee03e" />
<rect x="760" y="491" width="5" height="31" fill="#3ee03e" />
<rect x="761" y="492" width="3" height="29" fill="#000" />
<rect x="770" y="492" width="1" height="21" fill="#3ee03e" />
<rect x="768" y="493" width="5" height="20" fill="#3ee03e" />
<rect x="769" y="494" width="3" height="18" fill="#f4fff4" />
<rect x="778" y="494" width="1" height="20" fill="#3ee03e" />
<rect x="776" y="500" width="5" height="13" fill="#3ee03e" />
<rect x="777" y="501" width="3" height="11" fill="#000" />
<rect x="786" y="495" width="1" height="25" fill="#3ee03e" />
<rect x="784" y="500" width="5" height="11" fill="#3ee03e" />
<rect x="785" y="501" width="3" height="9" fill="#f4fff4" />
<rect x="794" y="471" width="1" height="40" fill="#3ee03e" />
<rect x="792" y="475" width="5" height="36" fill="#3ee03e" />
<rect x="793" y="476" width="3" height="34" fill="#000" />
<rect x="802" y="445" width="1" height="52" fill="#3ee03e" />
<rect x="800" y="445" width="5" height="32" fill="#3ee03e" />
<rect x="801" y="446" width="3" height="30" fill="#000" />
<rect x="810" y="436" width="1" height="46" fill="#3ee03e" />
<rect x="808" y="436" width="5" height="11" fill="#3ee03e" />
<rect x="809" y="437" width="3" height="9" fill="#000" />
<rect x="818" y="417" width="1" height="30" fill="#3ee03e" />
<rect x="816" y="438" width="5" height="6" fill="#3ee03e" />
<rect x="817" y="439" width="3" height="4" fill="#f4fff4" />
<rect x="826" y="443" width="1" height="34" fill="#3ee03e" />
<rect x="824" y="443" width="5" height="34" fill="#3ee03e" />
<rect x="825" y="444" width="3" height="32" fill="#f4fff4" />
<rect x="834" y="475" width="1" height="30" fill="#3ee03e" />
<rect x="832" y="478" width="5" height="9" fill="#3ee03e" />
<rect x="833" y="479" width="3" height="7" fill="#f4fff4" />
<rect x="842" y="486" width="1" height="16" fill="#3ee03e" />
<rect x="840" y="486" width="5" height="11" fill="#3ee03e" />
<rect x="841" y="487" width="3" height="9" fill="#f4fff4" />
<rect x="850" y="490" width="1" height="38" fill="#3ee03e" />
<rect x="848" y="498" width="5" height="28" fill="#3ee03e" />
<rect x="849" y="499" width="3" height="26" fill="#f4fff4" />
<rect x="858" y="511" width="1" height="31" fill="#3ee03e" />
<rect x="856" y="525" width="5" height="6" fill="#3ee03e" />
<rect x="857" y="526" width="3" height="4" fill="#f4fff4" />
<rect x="866" y="520" width="1" height="34" fill="#3ee03e" />
<rect x="864" y="530" width="5" height="20" fill="#3ee03e" />
<rect x="865" y="531" width="3" height="18" fill="#f4fff4" />
<rect x="874" y="526" width="1" height="27" fill="#3ee03e" />
<rect x="872" y="526" width="5" height="25" fill="#3ee03e" />
<rect x="873" y="527" width="3" height="23" fill="#000" />
<rect x="882" y="524" width="1" height="18" fill="#3ee03e" />
<rect x="880" y="526" width="5" height="2" fill="#3ee03e" />
<rect x="890" y="523" width="1" height="71" fill="#3ee03e" />
<rect x="888" y="524" width="5" height="70" fill="#3ee03e" />
<rect x="889" y="525" width="3" height="68" fill="#f4fff4" />
<rect x="898" y="568" width="1" height="26" fill="#3ee03e" />
<rect x="896" y="572" width="5" height="22" fill="#3ee03e" />
<rect x="897" y="573" width="3" height="20" fill="#000" />
<rect x="906" y="558" width="1" height="28" fill="#3ee03e" />
<rect x="904" y="566" width="5" height="6" fill="#3ee03e" />
<rect x="905" y="567" width="3" height="4" fill="#000" />
<rect x="914" y="540" width="1" height="31" fill="#3ee03e" />
<rect x="912" y="548" width="5" height="18" fill="#3ee03e" />
<rect x="913" y="549" width="3" height="16" fill="#000" />
<rect x="922" y="519" width="1" height="35" fill="#3ee03e" />
<rect x="920" y="519" width="5" height="31" fill="#3ee03e" />
<rect x="921" y="520" width="3" height="29" fill="#000" />
<rect x="930" y="505" width="1" height="25" fill="#3ee03e" />
<rect x="928" y="523" width="5" height="2" fill="#3ee03e" />
<rect x="938" y="504" width="1" height="33" fill="#3ee03e" />
<rect x="936" y="521" width="5" height="10" fill="#3ee03e" />
<rect x="937" y="522" width="3" height="8" fill="#f4fff4" />
<rect x="946" y="524" width="1" height="45" fill="#3ee03e" />
<rect x="944" y="529" width="5" height="19" fill="#3ee03e" />
<rect x="945" y="530" width="3" height="17" fill="#f4fff4" />
<rect x="954" y="527" width="1" height="25" fill="#3ee03e" />
<rect x="952" y="547" width="5" height="5" fill="#3ee03e" />
<rect x="953" y="548" width="3" height="3" fill="#f4fff4" />
<rect x="962" y="548" width="1" height="24" fill="#3ee03e" />
<rect x="960" y="552" width="5" height="16" fill="#3ee03e" />
<rect x="961" y="553" width="3" height="14" fill="#f4fff4" />
<rect x="970" y="551" width="1" height="19" fill="#3ee03e" />
<rect x="968" y="566" width="5" height="2" fill="#3ee03e" />
<rect x="978" y="555" width="1" height="47" fill="#3ee03e" />
<rect x="976" y="566" width="5" height="36" fill="#3ee03e" />
<rect x="977" y="567" width="3" height="34" fill="#f4fff4" />
<rect x="986" y="561" width="1" height="45" fill="#3ee03e" />
<rect x="984" y="567" width="5" height="37" fill="#3ee03e" />
<rect x="985" y="568" width="3" height="35" fill="#000" />
<rect x="994" y="551" width="1" height="24" fill="#3ee03e" />
<rect x="992" y="559" width="5" height="9" fill="#3ee03e" />
<rect x="993" y="560" width="3" height="7" fill="#000" />
<rect x="1002" y="542" width="1" height="20" fill="#3ee03e" />
<rect x="1000" y="547" width="5" height="10" fill="#3ee03e" />
<rect x="1001" y="548" width="3" height="8" fill="#000" />
<rect x="1010" y="529" width="1" height="20" fill="#3ee03e" />
<rect x="1008" y="540" width="5" height="9" fill="#3ee03e" />
<rect x="1009" y="541" width="3" height="7" fill="#000" />
<rect x="1018" y="529" width="1" height="33" fill="#3ee03e" />
<rect x="1016" y="541" width="5" height="2" fill="#3ee03e" />
<rect x="1026" y="508" width="1" height="54" fill="#3ee03e" />
<rect x="1024" y="508" width="5" height="34" fill="#3ee03e" />
<rect x="1025" y="509" width="3" height="32" fill="#000" />
<rect x="1034" y="476" width="1" height="44" fill="#3ee03e" />
<rect x="1032" y="476" width="5" height="32" fill="#3ee03e" />
<rect x="1033" y="477" width="3" height="30" fill="#000" />
<rect x="1042" y="468" width="1" height="29" fill="#3ee03e" />
<rect x="1040" y="476" width="5" height="11" fill="#3ee03e" />
<rect x="1041" y="477" width="3" height="9" fill="#f4fff4" />
<rect x="1050" y="471" width="1" height="18" fill="#3ee03e" />
<rect x="1048" y="471" width="5" height="18" fill="#3ee03e" />
<rect x="1049" y="472" width="3" height="16" fill="#000" />
<rect x="1058" y="466" width="1" height="39" fill="#3ee03e" />
<rect x="1056" y="471" width="5" height="34" fill="#3ee03e" />
<rect x="1057" y="472" width="3" height="32" fill="#f4fff4" />
<rect x="1066" y="496" width="1" height="29" fill="#3ee03e" />
<rect x="1064" y="504" width="5" height="5" fill="#3ee03e" />
<rect x="1065" y="505" width="3" height="3" fill="#f4fff4" />
<rect x="1074" y="488" width="1" height="21" fill="#3ee03e" />
<rect x="1072" y="488" width="5" height="21" fill="#3ee03e" />
<rect x="1073" y="489" width="3" height="19" fill="#000" />
<rect x="1082" y="487" width="1" height="29" fill="#3ee03e" />
<rect x="1080" y="487" width="5" height="29" fill="#3ee03e" />
<rect x="1081" y="488" width="3" height="27" fill="#f4fff4" />
<rect x="1090" y="506" width="1" height="32" fill="#3ee03e" />
<rect x="1088" y="517" width="5" height="19" fill="#3ee03e" />
<rect x="1089" y="518" width="3" height="17" fill="#f4fff4" />
<rect x="1098" y="517" width="1" height="22" fill="#3ee03e" />
<rect x="1096" y="521" width="5" height="18" fill="#3ee03e" />
<rect x="1097" y="522" width="3" height="16" fill="#000" />
<rect x="1106" y="517" width="1" height="32" fill="#3ee03e" />
<rect x="1104" y="521" width="5" height="20" fill="#3ee03e" />
<rect x="1105" y="522" width="3" height="18" fill="#f4fff4" />
<rect x="1114" y="530" width="1" height="26" fill="#3ee03e" />
<rect x="1112" y="530" width="5" height="11" fill="#3ee03e" />
<rect x="1113" y="531" width="3" height="9" fill="#000" />
<rect x="1122" y="510" width="1" height="32" fill="#3ee03e" />
<rect x="1120" y="531" width="5" height="7" fill="#3ee03e" />
<rect x="1121" y="532" width="3" height="5" fill="#f4fff4" />
<rect x="1130" y="529" width="1" height="17" fill="#3ee03e" />
<rect x="1128" y="529" width="5" height="10" fill="#3ee03e" />
<rect x="1129" y="530" width="3" height="8" fill="#000" />
<rect x="1138" y="450" width="1" height="143" fill="#3ee03e" />
<rect x="1136" y="528" width="5" height="58" fill="#3ee03e" />
<rect x="1137" y="529" width="3" height="56" fill="#f4fff4" />
<rect x="1146" y="579" width="1" height="34" fill="#3ee03e" />
<rect x="1144" y="585" width="5" height="17" fill="#3ee03e" />
<rect x="1145" y="586" width="3" height="15" fill="#f4fff4" />
<rect x="1154" y="577" width="1" height="36" fill="#3ee03e" />
<rect x="1152" y="577" width="5" height="23" fill="#3ee03e" />
<rect x="1153" y="578" width="3" height="21" fill="#000" />
<rect x="1162" y="410" width="1" height="173" fill="#3ee03e" />
<rect x="1160" y="458" width="5" height="124" fill="#3ee03e" />
<rect x="1161" y="459" width="3" height="122" fill="#000" />
<rect x="1170" y="428" width="1" height="94" fill="#3ee03e" />
<rect x="1168" y="455" width="5" height="52" fill="#3ee03e" />
<rect x="1169" y="456" width="3" height="50" fill="#f4fff4" />
<rect x="1178" y="484" width="1" height="29" fill="#3ee03e" />
<rect x="1176" y="500" width="5" height="8" fill="#3ee03e" />
<rect x="1177" y="501" width="3" height="6" fill="#000" />
<rect x="1186" y="490" width="1" height="30" fill="#3ee03e" />
<rect x="1184" y="490" width="5" height="10" fill="#3ee03e" />
<rect x="1185" y="491" width="3" height="8" fill="#000" />
<rect x="1194" y="488" width="1" height="40" fill="#3ee03e" />
<rect x="1192" y="490" width="5" height="27" fill="#3ee03e" />
<rect x="1193" y="491" width="3" height="25" fill="#f4fff4" />
<rect x="1202" y="516" width="1" height="45" fill="#3ee03e" />
<rect x="1200" y="516" width="5" height="34" fill="#3ee03e" />
<rect x="1201" y="517" width="3" height="32" fill="#f4fff4" />
<rect x="1210" y="547" width="1" height="14" fill="#3ee03e" />
<rect x="1208" y="549" width="5" height="12" fill="#3ee03e" />
<rect x="1209" y="550" width="3" height="10" fill="#f4fff4" />
<rect x="1218" y="557" width="1" height="25" fill="#3ee03e" />
<rect x="1216" y="560" width="5" height="2" fill="#3ee03e" />
<rect x="1226" y="555" width="1" height="36" fill="#3ee03e" />
<rect x="1224" y="560" width="5" height="24" fill="#3ee03e" />
<rect x="1225" y="561" width="3" height="22" fill="#f4fff4" />
<rect x="1234" y="545" width="1" height="38" fill="#3ee03e" />
<rect x="1232" y="554" width="5" height="29" fill="#3ee03e" />
<rect x="1233" y="555" width="3" height="27" fill="#000" />
<rect x="1242" y="535" width="1" height="28" fill="#3ee03e" />
<rect x="1240" y="553" width="5" height="2" fill="#3ee03e" />
<rect x="1250" y="549" width="1" height="12" fill="#3ee03e" />
<rect x="1248" y="553" width="5" height="4" fill="#3ee03e" />
<rect x="1249" y="554" width="3" height="2" fill="#000" />
<rect x="1258" y="554" width="1" height="37" fill="#3ee03e" />
<rect x="1256" y="554" width="5" height="35" fill="#3ee03e" />
<rect x="1257" y="555" width="3" height="33" fill="#f4fff4" />
<rect x="1266" y="581" width="1" height="20" fill="#3ee03e" />
<rect x="1264" y="588" width="5" height="7" fill="#3ee03e" />
<rect x="1265" y="589" width="3" height="5" fill="#f4fff4" />
<rect x="1274" y="583" width="1" height="21" fill="#3ee03e" />
<rect x="1272" y="591" width="5" height="4" fill="#3ee03e" />
<rect x="1273" y="592" width="3" height="2" fill="#000" />
<rect x="1282" y="591" width="1" height="35" fill="#3ee03e" />
<rect x="1280" y="591" width="5" height="26" fill="#3ee03e" />
<rect x="1281" y="592" width="3" height="24" fill="#f4fff4" />
<rect x="1290" y="611" width="1" height="15" fill="#3ee03e" />
<rect x="1288" y="615" width="5" height="4" fill="#3ee03e" />
<rect x="1289" y="616" width="3" height="2" fill="#f4fff4" />
<rect x="1298" y="600" width="1" height="19" fill="#3ee03e" />
<rect x="1296" y="604" width="5" height="15" fill="#3ee03e" />
<rect x="1297" y="605" width="3" height="13" fill="#000" />
<rect x="1306" y="583" width="1" height="38" fill="#3ee03e" />
<rect x="1304" y="583" width="5" height="21" fill="#3ee03e" />
<rect x="1305" y="584" width="3" height="19" fill="#000" />
<rect x="1314" y="578" width="1" height="25" fill="#3ee03e" />
<rect x="1312" y="583" width="5" height="14" fill="#3ee03e" />
<rect x="1313" y="584" width="3" height="12" fill="#f4fff4" />
<rect x="1322" y="589" width="1" height="28" fill="#3ee03e" />
<rect x="1320" y="597" width="5" height="20" fill="#3ee03e" />
<rect x="1321" y="598" width="3" height="18" fill="#f4fff4" />
<rect x="1330" y="604" width="1" height="13" fill="#3ee03e" />
<rect x="1328" y="604" width="5" height="13" fill="#3ee03e" />
<rect x="1329" y="605" width="3" height="11" fill="#000" />
<rect x="1338" y="573" width="1" height="35" fill="#3ee03e" />
<rect x="1336" y="588" width="5" height="20" fill="#3ee03e" />
<rect x="1337" y="589" width="3" height="18" fill="#000" />
<rect x="1346" y="580" width="1" height="18" fill="#3ee03e" />
<rect x="1344" y="583" width="5" height="4" fill="#3ee03e" />
<rect x="1345" y="584" width="3" height="2" fill="#f4fff4" />
<rect x="1354" y="583" width="1" height="16" fill="#3ee03e" />
<rect x="1352" y="585" width="5" height="14" fill="#3ee03e" />
<rect x="1353" y="586" width="3" height="12" fill="#f4fff4" />
<rect x="1362" y="605" width="1" height="20" fill="#3ee03e" />
<rect x="1360" y="605" width="5" height="19" fill="#3ee03e" />
<rect x="1361" y="606" width="3" height="17" fill="#f4fff4" />
<rect x="1370" y="624" width="1" height="24" fill="#3ee03e" />
<rect x="1368" y="624" width="5" height="10" fill="#3ee03e" />
<rect x="1369" y="625" width="3" height="8" fill="#f4fff4" />
<rect x="1378" y="607" width="1" height="28" fill="#3ee03e" />
<rect x="1376" y="611" width="5" height="24" fill="#3ee03e" />
<rect x="1377" y="612" width="3" height="22" fill="#000" />
<rect x="1386" y="603" width="1" height="15" fill="#3ee03e" />
<rect x="1384" y="605" width="5" height="5" fill="#3ee03e" />
<rect x="1385" y="606" width="3" height="3" fill="#000" />
<rect x="1394" y="596" width="1" height="31" fill="#3ee03e" />
<rect x="1392" y="606" width="5" height="19" fill="#3ee03e" />
<rect x="1393" y="607" width="3" height="17" fill="#f4fff4" />
<rect x="1402" y="613" width="1" height="16" fill="#3ee03e" />
<rect x="1400" y="617" width="5" height="11" fill="#3ee03e" />
<rect x="1401" y="618" width="3" height="9" fill="#000" />
<rect x="1410" y="616" width="1" height="23" fill="#3ee03e" />
<rect x="1408" y="617" width="5" height="18" fill="#3ee03e" />
<rect x="1409" y="618" width="3" height="16" fill="#f4fff4" />
<rect x="1418" y="628" width="1" height="32" fill="#3ee03e" />
<rect x="1416" y="634" width="5" height="21" fill="#3ee03e" />
<rect x="1417" y="635" width="3" height="19" fill="#f4fff4" />
<rect x="1426" y="653" width="1" height="44" fill="#3ee03e" />
<rect x="1424" y="653" width="5" height="40" fill="#3ee03e" />
<rect x="1425" y="654" width="3" height="38" fill="#f4fff4" />
<rect x="1434" y="677" width="1" height="37" fill="#3ee03e" />
<rect x="1432" y="691" width="5" height="14" fill="#3ee03e" />
<rect x="1433" y="692" width="3" height="12" fill="#f4fff4" />
<rect x="1442" y="673" width="1" height="40" fill="#3ee03e" />
<rect x="1440" y="674" width="5" height="31" fill="#3ee03e" />
<rect x="1441" y="675" width="3" height="29" fill="#000" />
<rect x="10" y="334" width="1728" height="2" fill="#10108c" />
<line x1="10" y1="592.5" x2="1738" y2="592.5" stroke="#c04c7c" stroke-width="1" stroke-dasharray="3 3"/>
<line x1="1162" y1="409.5" x2="1738" y2="409.5" stroke="#d0d0d0" stroke-width="1" stroke-dasharray="3 3"/>
<line x1="1058" y1="466.5" x2="1738" y2="466.5" stroke="#d0d0d0" stroke-width="1" stroke-dasharray="3 3"/>
<line x1="986" y1="605.5" x2="1738" y2="605.5" stroke="#d0d0d0" stroke-width="1" stroke-dasharray="3 3"/>
<line x1="1146" y1="612.5" x2="1738" y2="612.5" stroke="#d0d0d0" stroke-width="1" stroke-dasharray="3 3"/>
<text x="31" y="287" font-size="13" letter-spacing="-0.2" fill="#f0f0f0">EURAUD,M5</text>
<text x="114.5" y="287" font-size="14" fill="#f0f0f0">1.61411</text>
<text x="170.5" y="287" font-size="14" fill="#f0f0f0">1.61461</text>
<text x="226.3" y="287" font-size="14" fill="#f0f0f0">1.61399</text>
<text x="282" y="287" font-size="14" fill="#f0f0f0">1.61459</text>
<path d="M13 278h11l-5.5 6z" fill="#fff"/>
<text x="14" y="312" font-size="14" fill="#f0f0f0">Yesterday quotations:</text>
<text x="14" y="324" font-size="14" fill="#f0f0f0">H 1.6258</text>
<text x="14" y="336" font-size="14" fill="#f0f0f0">L 1.6148</text>
<text x="14" y="348" font-size="14" fill="#f0f0f0">C 1.6199</text>
<text x="1619" y="288" font-size="13.5" fill="#f0f0f0">BinaryTeam_TP_mt4</text>
<text x="1303" y="350" font-size="16" fill="#1a1ae0">Уровень пивота</text>
<text x="1479" y="674" font-size="20.5" letter-spacing="-0.6" fill="#fce020">0.26</text>
<path d="M74.0 402.0 l-6.5 6.5 h3.5 v7 h6 v-7 h3.5 z" fill="#000" stroke="#fff" stroke-width="1.3" shape-rendering="geometricPrecision" stroke-linejoin="miter"/>
<path d="M74.0 449.5 l-6.5 6.5 h3.5 v7 h6 v-7 h3.5 z" fill="#000" stroke="#fff" stroke-width="1.3" shape-rendering="geometricPrecision" stroke-linejoin="miter"/>
<path d="M1369.5 651.5 l-6.5 6.5 h3.5 v7 h6 v-7 h3.5 z" fill="#000" stroke="#fff" stroke-width="1.3" shape-rendering="geometricPrecision" stroke-linejoin="miter"/>
<path d="M1425.5 697.5 l-6.5 6.5 h3.5 v7 h6 v-7 h3.5 z" fill="#000" stroke="#fff" stroke-width="1.3" shape-rendering="geometricPrecision" stroke-linejoin="miter"/>
<path d="M1710.5 707 L1720.5 697 H1745 V717 H1720.5 Z" fill="#88a828" stroke="#f0f2c8" stroke-width="1.2" shape-rendering="geometricPrecision"/>
<path d="M1723 710 L1728.5 704 L1734 710 Z" fill="#2a8a10" shape-rendering="geometricPrecision"/>
<rect x="1736" y="703" width="2" height="9" fill="#f0fff0" />
<rect x="10" y="729" width="1728" height="1" fill="#ffffff" />
<rect x="10" y="731" width="1728" height="1" fill="#ffffff" />
<text x="14" y="749" font-size="14" fill="#f0f0f0">VolumeControl 445 444</text>
<rect x="10" y="778" width="1" height="7" fill="#9c9c9c" />
<rect x="18" y="781" width="1" height="4" fill="#9c9c9c" />
<rect x="26" y="782" width="1" height="3" fill="#9c9c9c" />
<rect x="34" y="778" width="1" height="7" fill="#9c9c9c" />
<rect x="42" y="783" width="1" height="2" fill="#9c9c9c" />
<rect x="50" y="782" width="1" height="3" fill="#9c9c9c" />
<rect x="58" y="782" width="1" height="3" fill="#9c9c9c" />
<rect x="66" y="780" width="1" height="5" fill="#9c9c9c" />
<rect x="74" y="748" width="1" height="37" fill="#40e040" />
<rect x="82" y="761" width="1" height="24" fill="#9c9c9c" />
<rect x="90" y="772" width="1" height="13" fill="#9c9c9c" />
<rect x="98" y="779" width="1" height="6" fill="#9c9c9c" />
<rect x="106" y="777" width="1" height="8" fill="#9c9c9c" />
<rect x="114" y="771" width="1" height="14" fill="#9c9c9c" />
<rect x="122" y="776" width="1" height="9" fill="#9c9c9c" />
<rect x="130" y="769" width="1" height="16" fill="#9c9c9c" />
<rect x="138" y="778" width="1" height="7" fill="#9c9c9c" />
<rect x="146" y="783" width="1" height="2" fill="#9c9c9c" />
<rect x="154" y="778" width="1" height="7" fill="#9c9c9c" />
<rect x="162" y="782" width="1" height="3" fill="#9c9c9c" />
<rect x="170" y="779" width="1" height="6" fill="#9c9c9c" />
<rect x="178" y="779" width="1" height="6" fill="#9c9c9c" />
<rect x="186" y="780" width="1" height="5" fill="#9c9c9c" />
<rect x="194" y="781" width="1" height="4" fill="#9c9c9c" />
<rect x="202" y="781" width="1" height="4" fill="#9c9c9c" />
<rect x="210" y="782" width="1" height="3" fill="#9c9c9c" />
<rect x="218" y="776" width="1" height="9" fill="#9c9c9c" />
<rect x="226" y="754" width="1" height="31" fill="#9c9c9c" />
<rect x="234" y="759" width="1" height="26" fill="#9c9c9c" />
<rect x="242" y="768" width="1" height="17" fill="#9c9c9c" />
<rect x="250" y="765" width="1" height="20" fill="#9c9c9c" />
<rect x="258" y="768" width="1" height="17" fill="#9c9c9c" />
<rect x="266" y="770" width="1" height="15" fill="#9c9c9c" />
<rect x="274" y="775" width="1" height="10" fill="#9c9c9c" />
<rect x="282" y="780" width="1" height="5" fill="#9c9c9c" />
<rect x="290" y="780" width="1" height="5" fill="#9c9c9c" />
<rect x="298" y="777" width="1" height="8" fill="#9c9c9c" />
<rect x="306" y="770" width="1" height="15" fill="#9c9c9c" />
<rect x="314" y="771" width="1" height="14" fill="#9c9c9c" />
<rect x="322" y="760" width="1" height="25" fill="#9c9c9c" />
<rect x="330" y="762" width="1" height="23" fill="#9c9c9c" />
<rect x="338" y="767" width="1" height="18" fill="#9c9c9c" />
<rect x="346" y="754" width="1" height="31" fill="#9c9c9c" />
<rect x="354" y="757" width="1" height="28" fill="#9c9c9c" />
<rect x="362" y="761" width="1" height="24" fill="#9c9c9c" />
<rect x="370" y="753" width="1" height="32" fill="#9c9c9c" />
<rect x="378" y="762" width="1" height="23" fill="#9c9c9c" />
<rect x="386" y="756" width="1" height="29" fill="#9c9c9c" />
<rect x="394" y="758" width="1" height="27" fill="#9c9c9c" />
<rect x="402" y="760" width="1" height="25" fill="#9c9c9c" />
<rect x="410" y="766" width="1" height="19" fill="#9c9c9c" />
<rect x="418" y="767" width="1" height="18" fill="#9c9c9c" />
<rect x="426" y="771" width="1" height="14" fill="#9c9c9c" />
<rect x="434" y="779" width="1" height="6" fill="#9c9c9c" />
<rect x="442" y="766" width="1" height="19" fill="#9c9c9c" />
<rect x="450" y="769" width="1" height="16" fill="#9c9c9c" />
<rect x="458" y="764" width="1" height="21" fill="#9c9c9c" />
<rect x="466" y="770" width="1" height="15" fill="#9c9c9c" />
<rect x="474" y="757" width="1" height="28" fill="#9c9c9c" />
<rect x="482" y="756" width="1" height="29" fill="#9c9c9c" />
<rect x="490" y="757" width="1" height="28" fill="#9c9c9c" />
<rect x="498" y="765" width="1" height="20" fill="#9c9c9c" />
<rect x="506" y="772" width="1" height="13" fill="#9c9c9c" />
<rect x="514" y="764" width="1" height="21" fill="#9c9c9c" />
<rect x="522" y="773" width="1" height="12" fill="#9c9c9c" />
<rect x="530" y="770" width="1" height="15" fill="#9c9c9c" />
<rect x="538" y="775" width="1" height="10" fill="#9c9c9c" />
<rect x="546" y="770" width="1" height="15" fill="#9c9c9c" />
<rect x="554" y="772" width="1" height="13" fill="#9c9c9c" />
<rect x="562" y="776" width="1" height="9" fill="#9c9c9c" />
<rect x="570" y="781" width="1" height="4" fill="#9c9c9c" />
<rect x="578" y="775" width="1" height="10" fill="#9c9c9c" />
<rect x="586" y="778" width="1" height="7" fill="#9c9c9c" />
<rect x="594" y="771" width="1" height="14" fill="#9c9c9c" />
<rect x="602" y="760" width="1" height="25" fill="#9c9c9c" />
<rect x="610" y="769" width="1" height="16" fill="#9c9c9c" />
<rect x="618" y="773" width="1" height="12" fill="#9c9c9c" />
<rect x="626" y="773" width="1" height="12" fill="#9c9c9c" />
<rect x="634" y="775" width="1" height="10" fill="#9c9c9c" />
<rect x="642" y="773" width="1" height="12" fill="#9c9c9c" />
<rect x="650" y="765" width="1" height="20" fill="#9c9c9c" />
<rect x="658" y="736" width="1" height="49" fill="#40e040" />
<rect x="666" y="762" width="1" height="23" fill="#9c9c9c" />
<rect x="674" y="751" width="1" height="34" fill="#9c9c9c" />
<rect x="682" y="772" width="1" height="13" fill="#9c9c9c" />
<rect x="690" y="780" width="1" height="5" fill="#9c9c9c" />
<rect x="698" y="775" width="1" height="10" fill="#9c9c9c" />
<rect x="706" y="775" width="1" height="10" fill="#9c9c9c" />
<rect x="714" y="778" width="1" height="7" fill="#9c9c9c" />
<rect x="722" y="778" width="1" height="7" fill="#9c9c9c" />
<rect x="730" y="779" width="1" height="6" fill="#9c9c9c" />
<rect x="738" y="775" width="1" height="10" fill="#9c9c9c" />
<rect x="746" y="780" width="1" height="5" fill="#9c9c9c" />
<rect x="754" y="773" width="1" height="12" fill="#9c9c9c" />
<rect x="762" y="778" width="1" height="7" fill="#9c9c9c" />
<rect x="770" y="781" width="1" height="4" fill="#9c9c9c" />
<rect x="778" y="780" width="1" height="5" fill="#9c9c9c" />
<rect x="786" y="775" width="1" height="10" fill="#9c9c9c" />
<rect x="794" y="775" width="1" height="10" fill="#9c9c9c" />
<rect x="802" y="769" width="1" height="16" fill="#9c9c9c" />
<rect x="810" y="769" width="1" height="16" fill="#9c9c9c" />
<rect x="818" y="772" width="1" height="13" fill="#9c9c9c" />
<rect x="826" y="772" width="1" height="13" fill="#9c9c9c" />
<rect x="834" y="775" width="1" height="10" fill="#9c9c9c" />
<rect x="842" y="778" width="1" height="7" fill="#9c9c9c" />
<rect x="850" y="772" width="1" height="13" fill="#9c9c9c" />
<rect x="858" y="774" width="1" height="11" fill="#9c9c9c" />
<rect x="866" y="775" width="1" height="10" fill="#9c9c9c" />
<rect x="874" y="776" width="1" height="9" fill="#9c9c9c" />
<rect x="882" y="775" width="1" height="10" fill="#9c9c9c" />
<rect x="890" y="772" width="1" height="13" fill="#9c9c9c" />
<rect x="898" y="769" width="1" height="16" fill="#9c9c9c" />
<rect x="906" y="772" width="1" height="13" fill="#9c9c9c" />
<rect x="914" y="769" width="1" height="16" fill="#9c9c9c" />
<rect x="922" y="773" width="1" height="12" fill="#9c9c9c" />
<rect x="930" y="769" width="1" height="16" fill="#9c9c9c" />
<rect x="938" y="765" width="1" height="20" fill="#9c9c9c" />
<rect x="946" y="765" width="1" height="20" fill="#9c9c9c" />
<rect x="954" y="774" width="1" height="11" fill="#9c9c9c" />
<rect x="962" y="774" width="1" height="11" fill="#9c9c9c" />
<rect x="970" y="772" width="1" height="13" fill="#9c9c9c" />
<rect x="978" y="765" width="1" height="20" fill="#9c9c9c" />
<rect x="986" y="769" width="1" height="16" fill="#9c9c9c" />
<rect x="994" y="773" width="1" height="12" fill="#9c9c9c" />
<rect x="1002" y="772" width="1" height="13" fill="#9c9c9c" />
<rect x="1010" y="772" width="1" height="13" fill="#9c9c9c" />
<rect x="1018" y="772" width="1" height="13" fill="#9c9c9c" />
<rect x="1026" y="772" width="1" height="13" fill="#9c9c9c" />
<rect x="1034" y="775" width="1" height="10" fill="#9c9c9c" />
<rect x="1042" y="767" width="1" height="18" fill="#9c9c9c" />
<rect x="1050" y="769" width="1" height="16" fill="#9c9c9c" />
<rect x="1058" y="770" width="1" height="15" fill="#9c9c9c" />
<rect x="1066" y="772" width="1" height="13" fill="#9c9c9c" />
<rect x="1074" y="777" width="1" height="8" fill="#9c9c9c" />
<rect x="1082" y="778" width="1" height="7" fill="#9c9c9c" />
<rect x="1090" y="771" width="1" height="14" fill="#9c9c9c" />
<rect x="1098" y="773" width="1" height="12" fill="#9c9c9c" />
<rect x="1106" y="777" width="1" height="8" fill="#9c9c9c" />
<rect x="1114" y="770" width="1" height="15" fill="#9c9c9c" />
<rect x="1122" y="773" width="1" height="12" fill="#9c9c9c" />
<rect x="1130" y="776" width="1" height="9" fill="#9c9c9c" />
<rect x="1138" y="759" width="1" height="26" fill="#9c9c9c" />
<rect x="1146" y="770" width="1" height="15" fill="#9c9c9c" />
<rect x="1154" y="774" width="1" height="11" fill="#9c9c9c" />
<rect x="1162" y="759" width="1" height="26" fill="#9c9c9c" />
<rect x="1170" y="741" width="1" height="44" fill="#9c9c9c" />
<rect x="1178" y="765" width="1" height="20" fill="#9c9c9c" />
<rect x="1186" y="769" width="1" height="16" fill="#9c9c9c" />
<rect x="1194" y="769" width="1" height="16" fill="#9c9c9c" />
<rect x="1202" y="769" width="1" height="16" fill="#9c9c9c" />
<rect x="1210" y="766" width="1" height="19" fill="#9c9c9c" />
<rect x="1218" y="761" width="1" height="24" fill="#9c9c9c" />
<rect x="1226" y="771" width="1" height="14" fill="#9c9c9c" />
<rect x="1234" y="770" width="1" height="15" fill="#9c9c9c" />
<rect x="1242" y="771" width="1" height="14" fill="#9c9c9c" />
<rect x="1250" y="774" width="1" height="11" fill="#9c9c9c" />
<rect x="1258" y="773" width="1" height="12" fill="#9c9c9c" />
<rect x="1266" y="772" width="1" height="13" fill="#9c9c9c" />
<rect x="1274" y="770" width="1" height="15" fill="#9c9c9c" />
<rect x="1282" y="769" width="1" height="16" fill="#9c9c9c" />
<rect x="1290" y="775" width="1" height="10" fill="#9c9c9c" />
<rect x="1298" y="771" width="1" height="14" fill="#9c9c9c" />
<rect x="1306" y="771" width="1" height="14" fill="#9c9c9c" />
<rect x="1314" y="769" width="1" height="16" fill="#9c9c9c" />
<rect x="1322" y="769" width="1" height="16" fill="#9c9c9c" />
<rect x="1330" y="775" width="1" height="10" fill="#9c9c9c" />
<rect x="1338" y="762" width="1" height="23" fill="#9c9c9c" />
<rect x="1346" y="772" width="1" height="13" fill="#9c9c9c" />
<rect x="1354" y="767" width="1" height="18" fill="#9c9c9c" />
<rect x="1362" y="770" width="1" height="15" fill="#9c9c9c" />
<rect x="1370" y="769" width="1" height="16" fill="#9c9c9c" />
<rect x="1378" y="776" width="1" height="9" fill="#9c9c9c" />
<rect x="1386" y="775" width="1" height="10" fill="#9c9c9c" />
<rect x="1394" y="772" width="1" height="13" fill="#9c9c9c" />
<rect x="1402" y="770" width="1" height="15" fill="#9c9c9c" />
<rect x="1410" y="769" width="1" height="16" fill="#9c9c9c" />
<rect x="1418" y="769" width="1" height="16" fill="#9c9c9c" />
<rect x="1426" y="762" width="1" height="23" fill="#9c9c9c" />
<rect x="1434" y="758" width="1" height="27" fill="#9c9c9c" />
<rect x="1442" y="769" width="1" height="16" fill="#9c9c9c" />
<rect x="10" y="768" width="1432" height="2" fill="#b82424" />
<rect x="10" y="785" width="1728" height="1" fill="#ffffff" />
<rect x="10" y="785" width="1" height="4" fill="#ffffff" />
<text x="10" y="803" font-size="14" fill="#f0f0f0">2 Jul 2019</text>
<rect x="138" y="785" width="1" height="4" fill="#ffffff" />
<text x="138" y="803" font-size="14" fill="#f0f0f0">2 Jul 02:05</text>
<rect x="266" y="785" width="1" height="4" fill="#ffffff" />
<text x="266" y="803" font-size="14" fill="#f0f0f0">2 Jul 03:25</text>
<rect x="394" y="785" width="1" height="4" fill="#ffffff" />
<text x="394" y="803" font-size="14" fill="#f0f0f0">2 Jul 04:45</text>
<rect x="522" y="785" width="1" height="4" fill="#ffffff" />
<text x="522" y="803" font-size="14" fill="#f0f0f0">2 Jul 06:05</text>
<rect x="650" y="785" width="1" height="4" fill="#ffffff" />
<text x="650" y="803" font-size="14" fill="#f0f0f0">2 Jul 07:25</text>
<rect x="778" y="785" width="1" height="4" fill="#ffffff" />
<text x="778" y="803" font-size="14" fill="#f0f0f0">2 Jul 08:45</text>
<rect x="906" y="785" width="1" height="4" fill="#ffffff" />
<text x="906" y="803" font-size="14" fill="#f0f0f0">2 Jul 10:05</text>
<rect x="1034" y="785" width="1" height="4" fill="#ffffff" />
<text x="1034" y="803" font-size="14" fill="#f0f0f0">2 Jul 11:25</text>
<rect x="1162" y="785" width="1" height="4" fill="#ffffff" />
<text x="1162" y="803" font-size="14" fill="#f0f0f0">2 Jul 12:45</text>
<rect x="1290" y="785" width="1" height="4" fill="#ffffff" />
<text x="1290" y="803" font-size="14" fill="#f0f0f0">2 Jul 14:05</text>
<rect x="1418" y="785" width="1" height="4" fill="#ffffff" />
<text x="1418" y="803" font-size="14" fill="#f0f0f0">2 Jul 15:25</text>
<rect x="15" y="703" width="220" height="22" fill="#b6cae2" />
<text x="49" y="719" font-size="13" fill="#2c3a52">EURAUD, M5 (Real)</text>
<rect x="15" y="703" width="220" height="1" fill="#d2def0" />
<rect x="15" y="703" width="1" height="22" fill="#d2def0" />
<rect x="18" y="706" width="14" height="11" fill="#2e3a84" />
<circle cx="24.5" cy="711.5" r="3" fill="none" stroke="#8a90c8" stroke-width="1" stroke-dasharray="1 1" shape-rendering="geometricPrecision"/>
<rect x="27" y="710" width="14" height="11" fill="#262a72" />
<rect x="27" y="710" width="7" height="5" fill="#d07090" />
<rect x="27" y="712" width="7" height="1" fill="#f0d0e0" />
<rect x="30" y="710" width="1" height="5" fill="#f0d0e0" />
<rect x="30" y="712" width="1" height="1" fill="#e02040" />
<rect x="30" y="717" width="2" height="2" fill="#ffffff" />
<rect x="36" y="715" width="1" height="1" fill="#ffffff" />
<rect x="39" y="713" width="1" height="1" fill="#ffffff" />
<rect x="37" y="718" width="1" height="1" fill="#ffffff" />
<rect x="37" y="711" width="1" height="1" fill="#e0e0ff" />
<rect x="184" y="709" width="8" height="2" fill="#1c2836" />
<rect x="191" y="709" width="1" height="8" fill="#1c2836" />
<rect x="189" y="716" width="3" height="1" fill="#1c2836" />
<rect x="184" y="709" width="1" height="3" fill="#1c2836" />
<rect x="181" y="712" width="8" height="2" fill="#1c2836" />
<rect x="181" y="712" width="1" height="8" fill="#1c2836" />
<rect x="188" y="712" width="1" height="8" fill="#1c2836" />
<rect x="181" y="719" width="8" height="1" fill="#1c2836" />
<rect x="200" y="709" width="11" height="2" fill="#1c2836" />
<rect x="200" y="709" width="1" height="11" fill="#1c2836" />
<rect x="210" y="709" width="1" height="11" fill="#1c2836" />
<rect x="200" y="719" width="11" height="1" fill="#1c2836" />
<path d="M220.5 710.5L228.5 718.5M228.5 710.5L220.5 718.5" stroke="#1c2836" stroke-width="2.2" shape-rendering="geometricPrecision"/>
<rect x="0" y="825" width="1738" height="2" fill="#ffffff" />
<rect x="132" y="827" width="1606" height="1" fill="#000000" />
<rect x="6" y="825" width="126" height="31" fill="#ffffff" />
<rect x="5" y="827" width="1" height="30" fill="#000000" />
<rect x="132" y="827" width="1" height="30" fill="#000000" />
<rect x="5" y="856" width="128" height="1" fill="#000000" />
<text transform="translate(23,849) scale(0.88,1)" x="0" y="0" font-size="18.5" letter-spacing="-0.5" fill="#141414">EURUSD,H1</text>
<text transform="translate(150,849) scale(0.935,1)" x="0" y="0" font-size="18.5" letter-spacing="-0.5" fill="#737b84">EURAUD,M5</text>
<rect x="265" y="830" width="1" height="25" fill="#606060" />
<rect x="0" y="858" width="1738" height="1" fill="#fbfbfb" />
<rect x="0" y="859" width="1738" height="7" fill="#f0f0f0" />
<rect x="822" y="860" width="1" height="6" fill="#a0a0a0" />
<rect x="998" y="860" width="1" height="6" fill="#a0a0a0" />
<rect x="1160" y="860" width="1" height="6" fill="#a0a0a0" />
<rect x="1270" y="860" width="1" height="6" fill="#a0a0a0" />
<rect x="1380" y="860" width="1" height="6" fill="#a0a0a0" />
<rect x="1484" y="860" width="1" height="6" fill="#a0a0a0" />
<rect x="1590" y="860" width="1" height="6" fill="#a0a0a0" />
<rect x="1693" y="860" width="1" height="6" fill="#a0a0a0" />
</svg>
</body></html>
